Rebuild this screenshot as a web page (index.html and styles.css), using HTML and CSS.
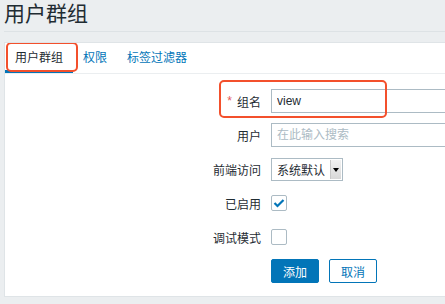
FILE: index.html
```
<!DOCTYPE html>
<html lang="zh-CN">
<head>
    <meta charset="UTF-8">
    <title>用户群组</title>
    <link rel="stylesheet" href="styles.css">
</head>
<body>
    <div class="page">
        <h1 class="page-title">用户群组</h1>

        <div class="panel">
            <ul class="tabs">
                <li class="tab active">用户群组<span class="mark mark-tab"></span></li>
                <li class="tab">权限</li>
                <li class="tab">标签过滤器</li>
            </ul>

            <form class="form">
                <span class="mark mark-name"></span>

                <label class="form-label"><span class="required">*</span>组名</label>
                <div class="form-field"><input class="text-input" type="text" value="view"></div>

                <label class="form-label">用户</label>
                <div class="form-field"><input class="text-input" type="text" placeholder="在此输入搜索"></div>

                <label class="form-label">前端访问</label>
                <div class="form-field">
                    <div class="select">
                        <span class="select-value">系统默认</span>
                        <span class="select-arrow"></span>
                    </div>
                </div>

                <label class="form-label">已启用</label>
                <div class="form-field">
                    <span class="checkbox">
                        <svg width="12" height="10" viewBox="0 0 12 10"><polyline points="1.5,5 4.5,8 10.5,2" fill="none" stroke="#0275b8" stroke-width="2.2"/></svg>
                    </span>
                </div>

                <label class="form-label">调试模式</label>
                <div class="form-field"><span class="checkbox"></span></div>

                <span></span>
                <div class="form-field buttons">
                    <button type="button" class="btn btn-primary">添加</button>
                    <button type="button" class="btn btn-alt">取消</button>
                </div>
            </form>
        </div>
    </div>
</body>
</html>
```

FILE: styles.css
```
html, body {
    margin: 0;
    padding: 0;
    overflow: hidden;
}

body {
    background: #ebeef0;
    font-family: "Liberation Sans", Arial, "Noto Sans CJK SC", sans-serif;
    font-size: 12px;
    color: #1f2c33;
}

.page {
    padding-left: 4px;
    overflow: hidden;
}

.page-title {
    margin: 0;
    font-size: 21px;
    font-weight: normal;
    line-height: 28px;
    padding-bottom: 3px;
    border-bottom: 1px solid #dde2e5;
}

.panel {
    margin-top: 10px;
    background: #fff;
    border: 1px solid #dfe4e7;
    border-right: 0;
    overflow: hidden;
}

.tabs {
    display: flex;
    margin: 0;
    padding: 0;
    list-style: none;
    height: 30px;
    border-bottom: 1px solid #ebeef0;
}

.tab {
    position: relative;
    padding: 0 10px;
    line-height: 30px;
    color: #0275b8;
}

.tab.active {
    color: #1f2c33;
    box-shadow: inset 0 -3px 0 #0275b8;
}

.mark {
    position: absolute;
    border: 2px solid #f3502c;
    border-radius: 5px;
    box-sizing: border-box;
}

.mark-tab {
    left: 1px;
    top: -1px;
    width: 72px;
    height: 30px;
}

.mark-name {
    left: 214px;
    top: 6px;
    width: 168px;
    height: 38px;
}

.form {
    position: relative;
    display: grid;
    grid-template-columns: 256px 1fr;
    grid-auto-rows: 34px;
    column-gap: 10px;
    padding: 10px 0 8px;
}

.form-label {
    display: flex;
    align-items: center;
    justify-content: flex-end;
}

.required {
    color: #e45959;
    margin-right: 5px;
}

.form-field {
    display: flex;
    align-items: center;
    min-width: 0;
}

.text-input {
    flex: none;
    width: 300px;
    height: 24px;
    box-sizing: border-box;
    border: 1px solid #acbbc4;
    padding: 0 5px;
    font: inherit;
    color: #1f2c33;
    outline: none;
}

.text-input::placeholder {
    color: #acbbc4;
}

.select {
    display: flex;
    align-items: stretch;
    width: 72px;
    height: 23px;
    box-sizing: border-box;
    border: 1px solid #acbbc4;
}

.select-value {
    flex: 1;
    padding-left: 5px;
    line-height: 22px;
    padding-top: 1px;
}

.select-arrow {
    position: relative;
    width: 10px;
    margin: 1px;
    background: linear-gradient(#f1f1f1, #d8d8d8);
    border-left: 1px solid #c8c8c8;
}

.select-arrow::after {
    content: "";
    position: absolute;
    left: 2px;
    top: 8px;
    border-left: 3px solid transparent;
    border-right: 3px solid transparent;
    border-top: 4px solid #000;
}

.checkbox {
    display: flex;
    align-items: center;
    justify-content: center;
    width: 16px;
    height: 16px;
    box-sizing: border-box;
    border: 1px solid #acbbc4;
    border-radius: 2px;
}

.buttons {
    gap: 10px;
}

.btn {
    width: 48px;
    height: 24px;
    box-sizing: border-box;
    font: inherit;
    border: 1px solid #0275b8;
    border-radius: 2px;
    padding: 0;
}

.btn-primary {
    background: #0275b8;
    color: #fff;
}

.btn-alt {
    background: #fff;
    color: #0275b8;
}
```
